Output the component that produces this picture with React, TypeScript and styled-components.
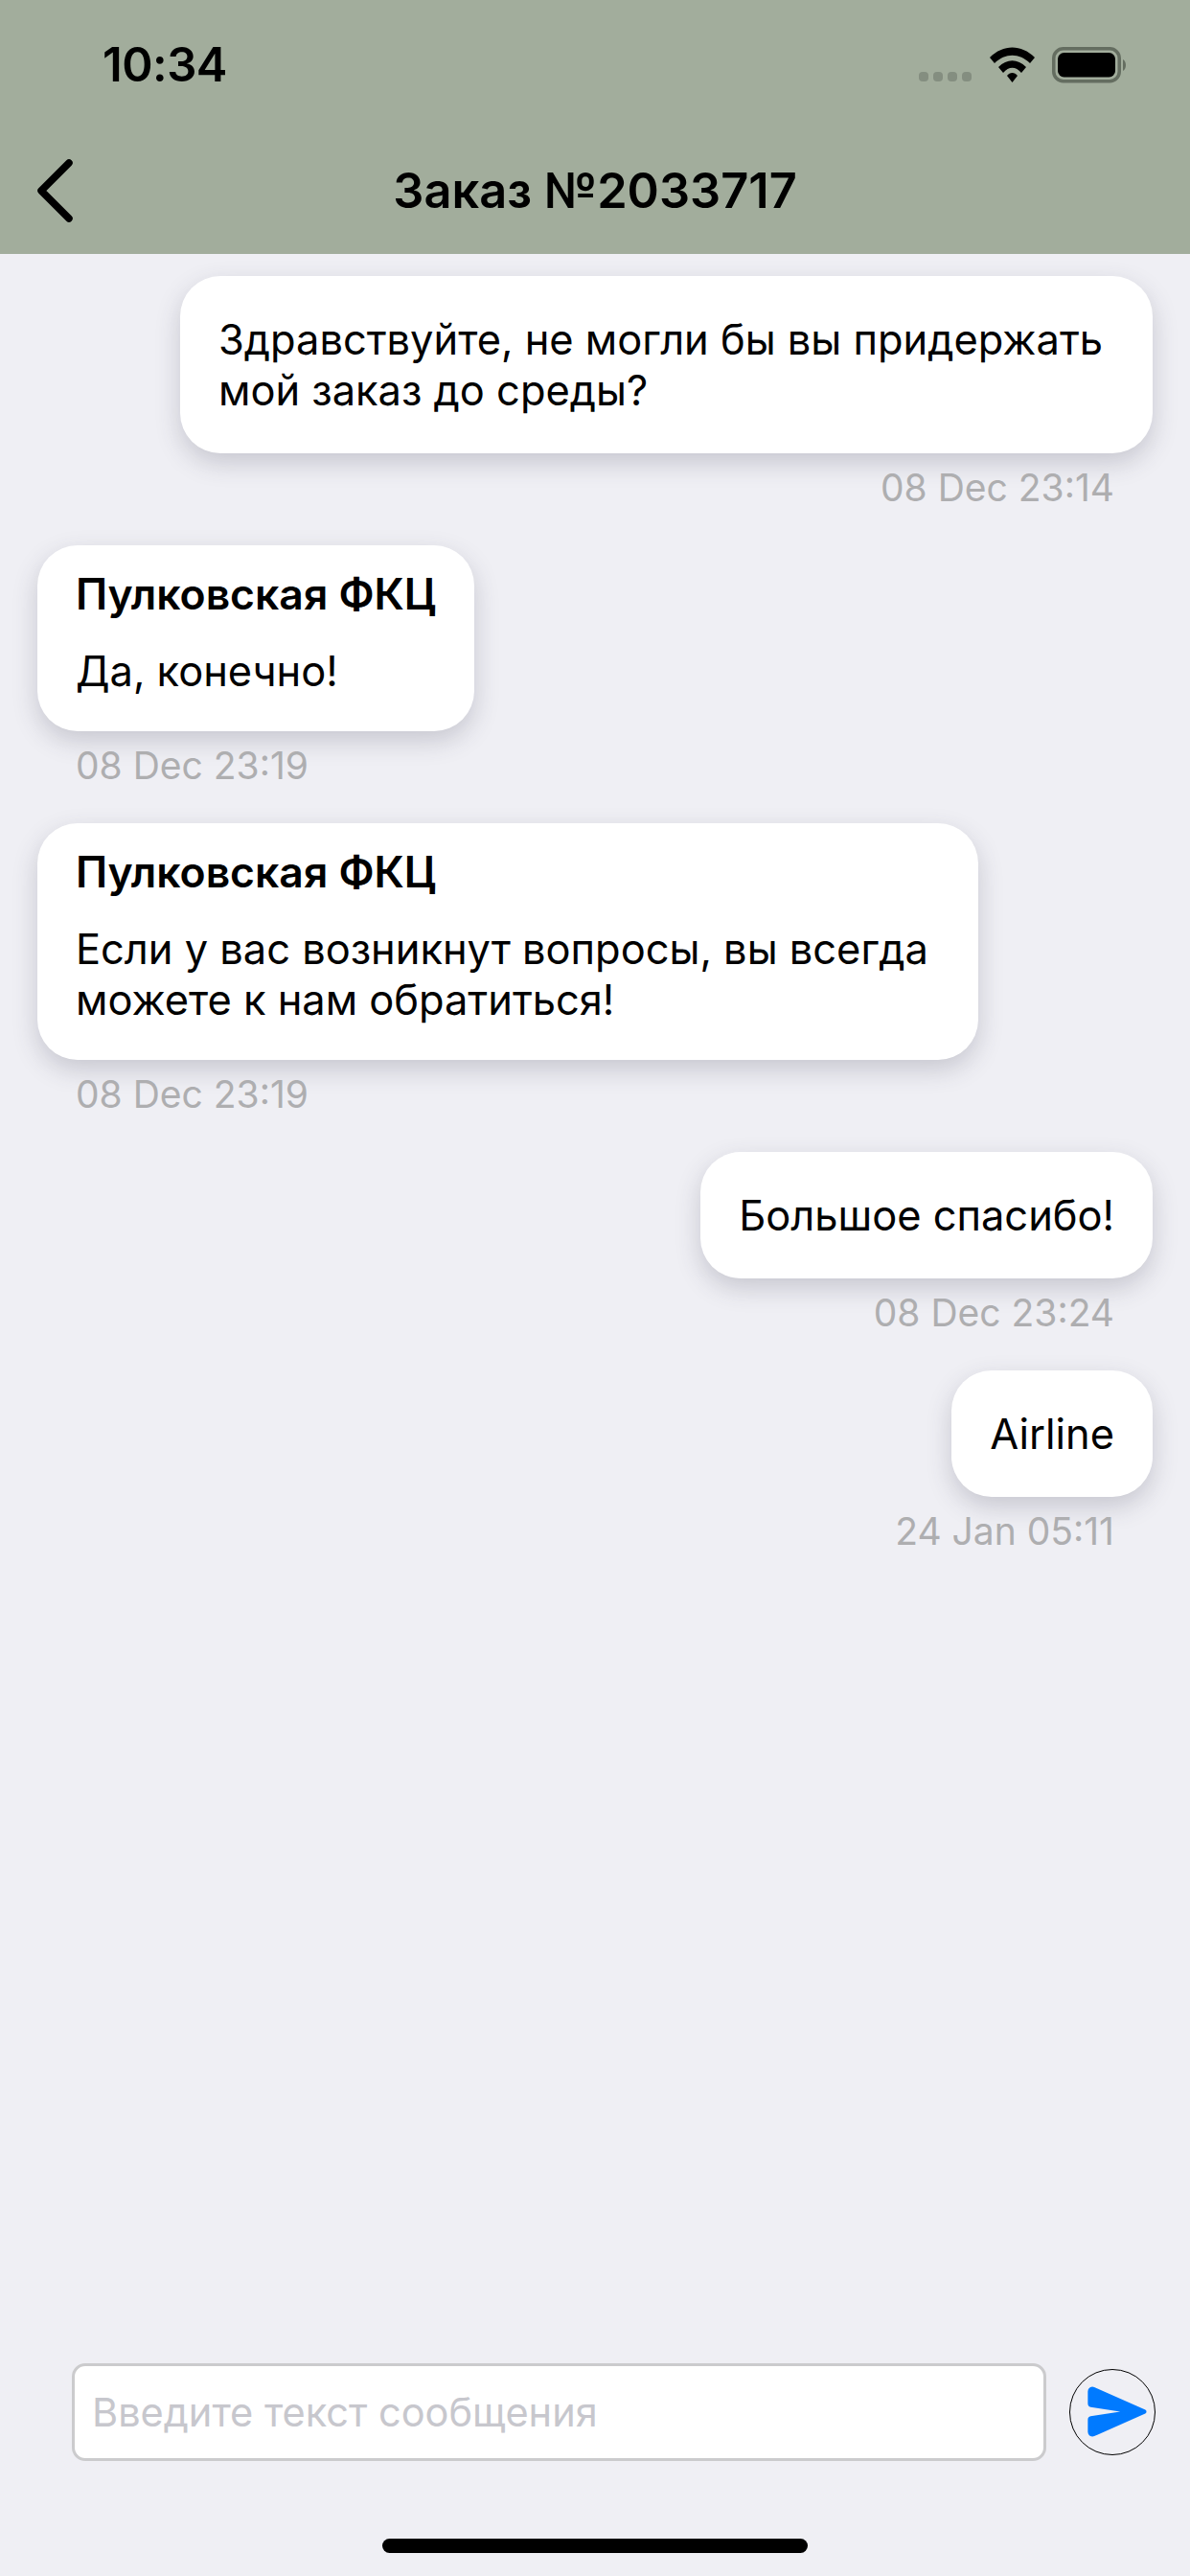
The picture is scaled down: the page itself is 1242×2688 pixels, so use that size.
import React from "react";
import styled, { createGlobalStyle } from "styled-components";

const Global = createGlobalStyle`
  html, body { margin: 0; padding: 0; background: #efeff4; }
  * { box-sizing: border-box; }
`;

const Screen = styled.div`
  width: 1242px;
  height: 2688px;
  display: flex;
  flex-direction: column;
  background: #efeff4;
  color: #000;
  font-family: Inter, "Noto Sans", sans-serif;
  overflow: hidden;
`;

const Header = styled.header`
  height: 265px;
  flex: none;
  background: #a2ad9c;
  display: flex;
  flex-direction: column;
`;

const StatusBar = styled.div`
  height: 132px;
  display: flex;
  justify-content: space-between;
  align-items: flex-start;
  padding: 42px 64px 0 107px;
`;

const Clock = styled.span`
  font-size: 49px;
  line-height: 52px;
  font-weight: 600;
  letter-spacing: -0.5px;
`;

const StatusIcons = styled.div`
  display: flex;
  align-items: flex-start;
  gap: 18px;
  padding-top: 7px;
`;

const NavBar = styled.div`
  flex: 1;
  display: grid;
  grid-template-columns: 200px 1fr 200px;
  align-items: center;
  padding: 0 38px;
`;

const BackButton = styled.button`
  width: 40px;
  height: 66px;
  padding: 0;
  border: 0;
  background: none;
  display: flex;
`;

const Title = styled.h1`
  margin: 0;
  font-size: 50.5px;
  line-height: 58px;
  font-weight: 600;
  text-align: center;
`;

const Messages = styled.main`
  flex: 1;
  display: flex;
  flex-direction: column;
  gap: 37px;
  padding: 23px 39px 0;
`;

const Message = styled.article<{ $mine: boolean }>`
  display: flex;
  flex-direction: column;
  align-items: ${(p) => (p.$mine ? "flex-end" : "flex-start")};
`;

const Bubble = styled.div<{ $mine: boolean }>`
  max-width: ${(p) => (p.$mine ? 1015 : 982)}px;
  padding: ${(p) => (p.$mine ? "40px 40px 39px" : "25px 40px 36px")};
  background: #fff;
  border-radius: 42px;
  box-shadow: 0 10px 26px rgba(60, 60, 80, 0.22);
`;

const Sender = styled.div`
  font-size: 44.5px;
  line-height: 52px;
  font-weight: 600;
  margin-bottom: 28px;
`;

const Body = styled.div`
  font-size: 43.4px;
  line-height: 53px;
  font-weight: 400;
`;

const Stamp = styled.time`
  font-size: 39px;
  line-height: 46px;
  padding: 13px 40px 0;
  color: #aeaeb0;
`;

const Composer = styled.form`
  flex: none;
  display: flex;
  align-items: center;
  gap: 24px;
  padding: 0 36px 0 75px;
`;

const Field = styled.input`
  flex: 1;
  min-width: 0;
  height: 102px;
  padding: 0 18px;
  background: #fff;
  border: 3px solid #cbcbcd;
  border-radius: 14px;
  font: 400 41.5px Inter, "Noto Sans", sans-serif;
  outline: none;
  &::placeholder { color: #c7c7cd; opacity: 1; }
`;

const SendButton = styled.button`
  flex: none;
  width: 90px;
  height: 90px;
  padding: 0;
  border: 1.6px solid #000;
  border-radius: 50%;
  background: none;
  display: flex;
`;

const HomeIndicator = styled.div`
  flex: none;
  width: 444px;
  height: 15px;
  margin: 81px auto 24px;
  border-radius: 8px;
  background: #000;
`;

const data = [
  { mine: true, text: "Здравствуйте, не могли бы вы придержать мой заказ до среды?", time: "08 Dec 23:14" },
  { mine: false, sender: "Пулковская ФКЦ", text: "Да, конечно!", time: "08 Dec 23:19" },
  { mine: false, sender: "Пулковская ФКЦ", text: "Если у вас возникнут вопросы, вы всегда можете к нам обратиться!", time: "08 Dec 23:19" },
  { mine: true, text: "Большое спасибо!", time: "08 Dec 23:24" },
  { mine: true, text: "Airline", time: "24 Jan 05:11" },
];

const StatusGlyphs = () => (
  <>
    <svg width="56" height="37" viewBox="0 0 56 37">
      {[0, 15, 30, 45].map((x) => (
        <rect key={x} x={x} y="26" width="10" height="10" rx="4" fill="#848e80" />
      ))}
    </svg>
    <svg width="47" height="37" viewBox="0 0 47 37">
      <path d="M0 11 C14 -3 33 -3 47 11 L42 17 C31 6 16 6 5 17 Z" fill="#000" />
      <path d="M9 21 C18 12 29 12 38 21 L33 27 C27 20 20 20 14 27 Z" fill="#000" />
      <path d="M18 30 C21 26 26 26 29 30 L23.5 37 Z" fill="#000" />
    </svg>
    <svg width="80" height="38" viewBox="0 0 80 38">
      <rect x="1.75" y="1.75" width="68.5" height="34" rx="10" fill="none" stroke="#646d60" strokeWidth="3.5" />
      <rect x="6" y="6" width="60" height="25.5" rx="6.5" fill="#000" />
      <path d="M74 13 C78 15 78 23 74 25 Z" fill="#646d60" />
    </svg>
  </>
);

export default function App() {
  return (
    <Screen>
      <Global />
      <Header>
        <StatusBar>
          <Clock>10:34</Clock>
          <StatusIcons>
            <StatusGlyphs />
          </StatusIcons>
        </StatusBar>
        <NavBar>
          <BackButton type="button" aria-label="Назад">
            <svg width="40" height="66" viewBox="0 0 40 66">
              <path d="M34 4 L5 33 L34 62" fill="none" stroke="#000" strokeWidth="7.5" strokeLinecap="round" strokeLinejoin="round" />
            </svg>
          </BackButton>
          <Title>Заказ №2033717</Title>
        </NavBar>
      </Header>
      <Messages>
        {data.map((m, i) => (
          <Message key={i} $mine={m.mine}>
            <Bubble $mine={m.mine}>
              {m.sender && <Sender>{m.sender}</Sender>}
              <Body>{m.text}</Body>
            </Bubble>
            <Stamp>{m.time}</Stamp>
          </Message>
        ))}
      </Messages>
      <Composer>
        <Field placeholder="Введите текст сообщения" />
        <SendButton type="button" aria-label="Отправить">
          <svg width="87" height="87" viewBox="0 0 90 90">
            <path d="M19 23 a5 5 0 0 1 7-4.5 L81 43 a2.2 2.2 0 0 1 0 4 L26 71.5 a5 5 0 0 1 -7-4.5 V54 a4 4 0 0 1 3-4 L54 45 L22 40 a4 4 0 0 1-3-4 Z" fill="#007aff" />
          </svg>
        </SendButton>
      </Composer>
      <HomeIndicator />
    </Screen>
  );
}
